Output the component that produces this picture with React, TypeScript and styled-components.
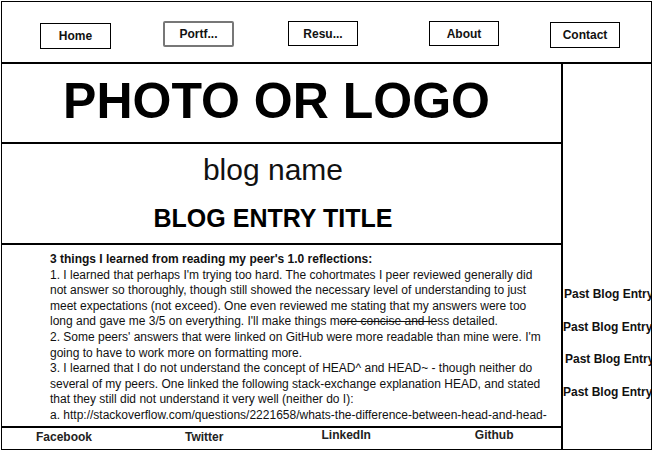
import React from "react";
import styled, { createGlobalStyle } from "styled-components";

const Global = createGlobalStyle`
  html, body { margin: 0; padding: 0; background: #fff; }
  body { font-family: "Liberation Sans", Arial, sans-serif; color: #111; }
  * { box-sizing: border-box; }
`;

const Frame = styled.div`
  margin: 1px 0 0 1px;
  width: 651px;
  height: 449px;
  border: 1px solid #000;
  display: flex;
  flex-direction: column;
  overflow: hidden;
`;

const Header = styled.header`
  height: 62px;
  border-bottom: 2px solid #000;
  display: flex;
  align-items: flex-start;
  flex-shrink: 0;
`;

const NavButton = styled.div<{ $left: number; $top: number; $w: number; $h: number; $active?: boolean }>`
  margin-left: ${(p) => p.$left}px;
  margin-top: ${(p) => p.$top}px;
  width: ${(p) => p.$w}px;
  height: ${(p) => p.$h}px;
  border: ${(p) => (p.$active ? "2px solid #777" : "1px solid #000")};
  border-radius: ${(p) => (p.$active ? "2px" : "0")};
  display: flex;
  align-items: center;
  justify-content: center;
  font-size: 12px;
  font-weight: bold;
  color: #111;
`;

const Body = styled.div`
  flex: 1;
  display: flex;
  min-height: 0;
`;

const MainCol = styled.main`
  width: 561px;
  flex-shrink: 0;
  border-right: 2px solid #000;
  display: flex;
  flex-direction: column;
  min-height: 0;
`;

const LogoSection = styled.section`
  height: 80px;
  border-bottom: 2px solid #000;
  display: flex;
  align-items: center;
  justify-content: center;
  padding: 0 10px 5px 0;
  flex-shrink: 0;
`;

const Logo = styled.h1`
  margin: 0;
  font-size: 50px;
  font-weight: bold;
  line-height: 1;
  color: #000;
`;

const TitleSection = styled.section`
  height: 101px;
  border-bottom: 2px solid #000;
  display: flex;
  flex-direction: column;
  align-items: center;
  padding: 6px 17px 0 0;
  flex-shrink: 0;
`;

const BlogName = styled.div`
  font-size: 30px;
  line-height: 40px;
  color: #111;
`;

const EntryTitle = styled.h2`
  margin: 13px 0 0;
  font-size: 25px;
  line-height: 30px;
  font-weight: bold;
  color: #000;
`;

const Content = styled.article`
  flex: 1;
  min-height: 0;
  overflow: hidden;
  padding: 7px 13px 0 48px;
  font-size: 12px;
  line-height: 15.6px;
  color: #111;
`;

const Para = styled.p<{ $bold?: boolean }>`
  margin: 0;
  font-weight: ${(p) => (p.$bold ? "bold" : "normal")};
`;

const Strike = styled.span`
  text-decoration: line-through;
`;

const Footer = styled.footer`
  height: 23px;
  border-top: 2px solid #000;
  display: flex;
  align-items: flex-start;
  flex-shrink: 0;
`;

const FooterLink = styled.div<{ $left: number; $top: number }>`
  margin-left: ${(p) => p.$left}px;
  margin-top: ${(p) => p.$top}px;
  font-size: 12px;
  font-weight: bold;
  line-height: 14px;
  color: #222;
`;

const Sidebar = styled.aside`
  flex: 1;
  min-width: 0;
  display: flex;
  flex-direction: column;
  padding-top: 223px;
  gap: 18.5px;
  white-space: nowrap;
`;

const PastEntry = styled.div<{ $left: number }>`
  margin-left: ${(p) => p.$left}px;
  font-size: 12px;
  font-weight: bold;
  line-height: 14px;
  color: #111;
`;

const navItems = [
  { label: "Home", left: 38, top: 21, w: 71, h: 26 },
  { label: "Portf...", left: 52, top: 19, w: 71, h: 26, active: true },
  { label: "Resu...", left: 54, top: 19, w: 70, h: 25 },
  { label: "About", left: 71, top: 19, w: 70, h: 25 },
  { label: "Contact", left: 51, top: 20, w: 70, h: 26 },
];

const footerItems = [
  { label: "Facebook", left: 34, top: 2 },
  { label: "Twitter", left: 93, top: 2 },
  { label: "LinkedIn", left: 98, top: 0 },
  { label: "Github", left: 104, top: 0 },
];

const pastOffsets = [1, 0, 2, 0];

export default function App() {
  return (
    <>
      <Global />
      <Frame>
        <Header>
          {navItems.map((n) => (
            <NavButton key={n.label} $left={n.left} $top={n.top} $w={n.w} $h={n.h} $active={n.active}>
              {n.label}
            </NavButton>
          ))}
        </Header>
        <Body>
          <MainCol>
            <LogoSection>
              <Logo>PHOTO OR LOGO</Logo>
            </LogoSection>
            <TitleSection>
              <BlogName>blog name</BlogName>
              <EntryTitle>BLOG ENTRY TITLE</EntryTitle>
            </TitleSection>
            <Content>
              <Para $bold>3 things I learned from reading my peer's 1.0 reflections:</Para>
              <Para>
                1. I learned that perhaps I'm trying too hard. The cohortmates I peer reviewed generally did not
                answer so thoroughly, though still showed the necessary level of understanding to just meet
                expectations (not exceed). One even reviewed me stating that my answers were too long and gave me
                3/5 on everything. I'll make things m<Strike>ore concise and le</Strike>ss detailed.
              </Para>
              <Para>
                2. Some peers' answers that were linked on GitHub were more readable than mine were. I'm going to
                have to work more on formatting more.
              </Para>
              <Para>
                3. I learned that I do not understand the concept of HEAD^ and HEAD~ - though neither do several of
                my peers. One linked the following stack-exchange explanation HEAD, and stated that they still did
                not understand it very well (neither do I):
              </Para>
              <Para>
                a. http://stackoverflow.com/questions/2221658/whats-the-difference-between-head-and-head-in-git
              </Para>
            </Content>
            <Footer>
              {footerItems.map((f) => (
                <FooterLink key={f.label} $left={f.left} $top={f.top}>
                  {f.label}
                </FooterLink>
              ))}
            </Footer>
          </MainCol>
          <Sidebar>
            {pastOffsets.map((o, i) => (
              <PastEntry key={i} $left={o}>
                Past Blog Entry
              </PastEntry>
            ))}
          </Sidebar>
        </Body>
      </Frame>
    </>
  );
}
